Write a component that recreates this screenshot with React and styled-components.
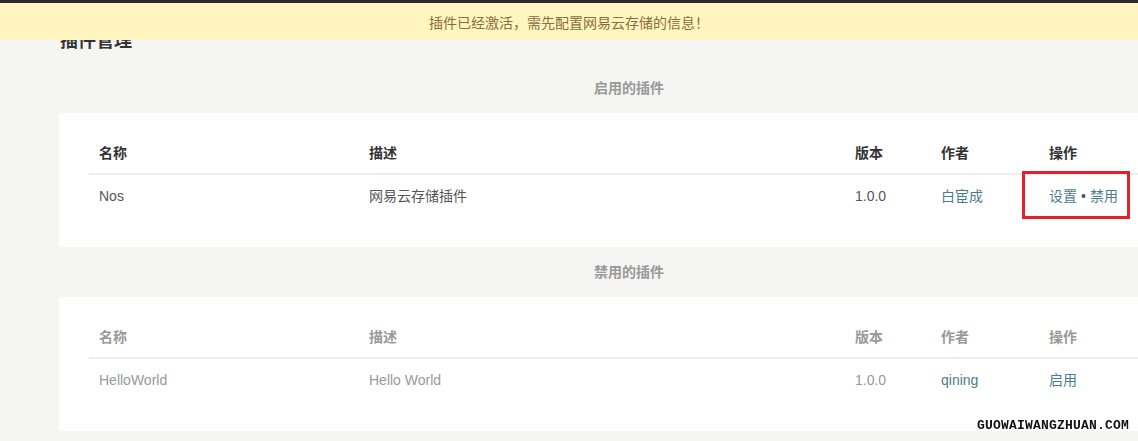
import React from "react";
import styled, { createGlobalStyle } from "styled-components";

const GlobalStyle = createGlobalStyle`
  html, body {
    margin: 0;
    padding: 0;
    background: #f5f5f3;
    overflow: hidden;
    font-family: "Liberation Sans", "Noto Sans CJK SC", sans-serif;
    font-size: 14px;
    color: #555;
  }
`;

const Notice = styled.div`
  position: fixed;
  top: 0;
  left: 0;
  right: 0;
  height: 37px;
  border-top: 3px solid #2a2a2c;
  background: #fff5c0;
  color: #8a6d3b;
  display: flex;
  align-items: center;
  justify-content: center;
  font-size: 14px;
  z-index: 10;
`;

const Page = styled.div`
  width: 1140px;
  margin-left: 59px;
`;

const PageTitle = styled.h2`
  margin: 0;
  padding: 31px 0 0 1px;
  font-size: 18px;
  line-height: 20px;
  font-weight: bold;
  color: #333;
`;

const SectionTitle = styled.h3`
  margin: 0;
  padding: ${(p) => (p.$first ? "27px" : "15px")} 0 15px;
  text-align: center;
  font-size: 14px;
  line-height: 20px;
  font-weight: bold;
  color: #999;
`;

const Card = styled.div`
  background: #fff;
  padding: 20px 30px 31px;
`;

const Row = styled.div`
  display: grid;
  grid-template-columns: 270px 486px 86px 108px 130px;
  border-bottom: ${(p) => (p.$head ? "2px solid #eee" : "none")};
`;

const Cell = styled.div`
  position: relative;
  padding: ${(p) => (p.$head ? "10px 10px 10px" : "11px 10px 10px")};
  line-height: 20px;
  font-weight: ${(p) => (p.$head ? "bold" : "normal")};
  color: ${(p) => (p.$head ? (p.$muted ? "#999" : "#333") : p.$muted ? "#999" : "#555")};
`;

const Link = styled.a`
  color: #4b7c8e;
  text-decoration: none;
`;

const Dot = styled.span`
  color: #555;
  margin: 0 4px;
`;

const Highlight = styled.div`
  position: absolute;
  left: -17px;
  top: -4px;
  width: 102px;
  height: 42px;
  border: 3px solid #e3202b;
  pointer-events: none;
`;

const Watermark = styled.div`
  position: fixed;
  right: 9px;
  bottom: 8px;
  font-family: "Liberation Mono", monospace;
  font-weight: bold;
  font-size: 13px;
  letter-spacing: 0.2px;
  color: #111;
`;

const headers = ["名称", "描述", "版本", "作者", "操作"];

function PluginTable({ muted, plugin, actions }) {
  return (
    <Card>
      <Row $head>
        {headers.map((h) => (
          <Cell key={h} $head $muted={muted}>
            {h}
          </Cell>
        ))}
      </Row>
      <Row>
        <Cell $muted={muted}>{plugin.name}</Cell>
        <Cell $muted={muted}>{plugin.desc}</Cell>
        <Cell $muted={muted}>{plugin.version}</Cell>
        <Cell>
          <Link href="#">{plugin.author}</Link>
        </Cell>
        <Cell>{actions}</Cell>
      </Row>
    </Card>
  );
}

export default function App() {
  return (
    <>
      <GlobalStyle />
      <Notice>插件已经激活，需先配置网易云存储的信息！</Notice>
      <Page>
        <PageTitle>插件管理</PageTitle>
        <SectionTitle $first>启用的插件</SectionTitle>
        <PluginTable
          plugin={{ name: "Nos", desc: "网易云存储插件", version: "1.0.0", author: "白宦成" }}
          actions={
            <>
              <Link href="#">设置</Link>
              <Dot>•</Dot>
              <Link href="#">禁用</Link>
              <Highlight />
            </>
          }
        />
        <SectionTitle>禁用的插件</SectionTitle>
        <PluginTable
          muted
          plugin={{ name: "HelloWorld", desc: "Hello World", version: "1.0.0", author: "qining" }}
          actions={<Link href="#">启用</Link>}
        />
      </Page>
      <Watermark>GUOWAIWANGZHUAN.COM</Watermark>
    </>
  );
}
